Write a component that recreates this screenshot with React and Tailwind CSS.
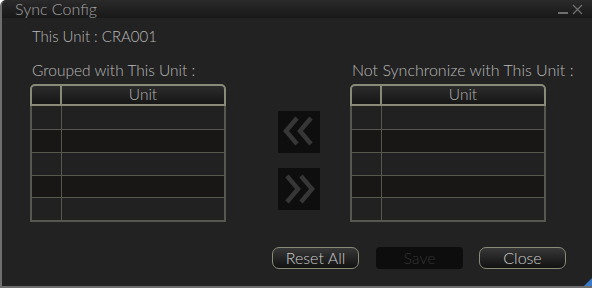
import React from 'react';

const font = { fontFamily: 'Lato, "Noto Sans", sans-serif' };

const rowHeights = ['h-[23px]', 'h-[23px]', 'h-[23px]', 'h-[22px]', 'h-[23px]'];

const UnitTable = () => {
  return (
    <div className="w-[196px]">
      {/* header */}
      <div className="flex h-[22px] rounded-t-[5px] border-2 border-[#8a8a78] bg-gradient-to-b from-[#2c2c2c] to-[#161616]">
        <div className="w-[30px] border-r-2 border-[#8a8a78]" />
        <div className="flex-1 flex items-center justify-center text-[15.5px] text-[#b0b0b0] leading-none">Unit</div>
      </div>
      {/* rows */}
      <div className="border-x-2 border-b-2 border-[#57574f]">
        {rowHeights.map((h, i) => (
          <div
            key={i}
            className={`flex ${h} ${i > 0 ? 'border-t border-[#57574f]' : ''} ${i % 2 === 1 ? 'bg-[#181715]' : 'bg-[#212121]'}`}
          >
            <div className="w-[30px] border-r border-[#57574f]" />
            <div className="flex-1" />
          </div>
        ))}
      </div>
    </div>
  );
};

const Chevrons = ({ dir }) => (
  <svg width="42" height="42" viewBox="0 0 42 42">
    {dir === 'left' ? (
      <g fill="none" stroke="#363636" strokeWidth="4.5" strokeLinecap="butt" strokeLinejoin="miter">
        <polyline points="19,7 8,20 19,33" />
        <polyline points="33,7 22,20 33,33" />
      </g>
    ) : (
      <g fill="none" stroke="#363636" strokeWidth="4.5" strokeLinecap="butt" strokeLinejoin="miter">
        <polyline points="9,8 20,21 9,34" />
        <polyline points="23,8 34,21 23,34" />
      </g>
    )}
  </svg>
);

const Button = ({ children, disabled, className = '' }) =>
  disabled ? (
    <div className={`w-[87px] h-[22px] rounded-[4px] bg-[#0d0d0d] flex items-center justify-center text-[16px] text-[#333333] ${className}`}>
      {children}
    </div>
  ) : (
    <div className={`w-[87px] h-[22px] rounded-[7px] border border-[#8a8a78] bg-gradient-to-b from-[#383838] to-[#121212] flex items-center justify-center text-[16px] text-[#cccccc] ${className}`}>
      {children}
    </div>
  );

export default function App() {
  return (
    <div
      className="relative w-[592px] h-[288px] bg-[#222222] border-l-2 border-b-2 border-[#6e6e6e] rounded-tl-[6px] overflow-hidden text-[#b8b8b8] font-light"
      style={font}
    >
      {/* title bar */}
      <div className="h-[18px] flex items-center justify-between bg-gradient-to-b from-[#2a2a2a] to-[#181818] pl-[13px] pr-[9px]">
        <span className="text-[16px] text-[#a4a4a4] leading-none">Sync Config</span>
        <div className="flex items-end gap-[4px]">
          <div className="w-[10px] h-[2px] bg-[#6e6e6e] mb-[1px]" />
          <svg width="11" height="11" viewBox="0 0 11 11">
            <path d="M1 1 L10 10 M10 1 L1 10" stroke="#6e6e6e" strokeWidth="1.3" />
          </svg>
        </div>
      </div>

      <div className="pl-[28px] pt-[8px]">
        <div className="text-[15px] leading-[20px] pl-[2px]">This Unit : CRA001</div>

        <div className="flex mt-[14px]">
          {/* left */}
          <div>
            <div className="text-[15.5px] leading-[20px] pl-[2px] mb-[4px] whitespace-nowrap">Grouped with This Unit :</div>
            <UnitTable />
          </div>

          {/* arrows */}
          <div className="flex flex-col gap-[15px] ml-[52px] mt-[51px]">
            <div className="w-[42px] h-[42px] bg-[#0e0e0e]">
              <Chevrons dir="left" />
            </div>
            <div className="w-[42px] h-[42px] bg-[#0e0e0e]">
              <Chevrons dir="right" />
            </div>
          </div>

          {/* right */}
          <div className="ml-[30px]">
            <div className="text-[16px] leading-[20px] pl-[2px] mb-[4px] whitespace-nowrap">Not Synchronize with This Unit :</div>
            <UnitTable />
          </div>
        </div>

        <div className="flex ml-[242px] mt-[25px]">
          <Button>Reset All</Button>
          <Button disabled className="ml-[17px]">Save</Button>
          <Button className="ml-[16px]">Close</Button>
        </div>
      </div>

      {/* corner accent */}
      <div className="absolute right-0 bottom-0 w-0 h-0 border-l-[8px] border-l-transparent border-b-[8px] border-b-[#3a78c8]" />
    </div>
  );
}
